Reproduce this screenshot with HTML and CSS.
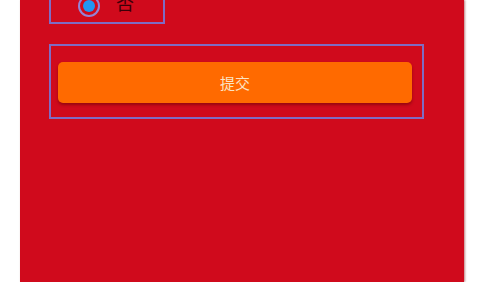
FILE: index.html
```html
<!DOCTYPE html>
<html lang="zh">
<head>
<meta charset="utf-8">
<link rel="stylesheet" href="styles.css">
</head>
<body>
<div class="page">
  <div class="radio-group">
    <span class="radio"><span class="dot"></span></span>
    <span class="label">否</span>
  </div>
  <div class="submit-box">
    <button class="submit">提交</button>
  </div>
</div>
</body>
</html>
```
FILE: styles.css
```css
html, body {
  margin: 0;
  padding: 0;
  background: #ffffff;
  font-family: "Noto Sans CJK SC", "Noto Sans", sans-serif;
}
.page {
  margin-left: 20px;
  width: 444px;
  height: 282px;
  background: #d00a1c;
  padding-left: 29px;
  box-sizing: border-box;
  overflow: hidden;
  box-shadow: 1px 0 2px rgba(120, 0, 0, 0.5);
}
.radio-group {
  margin-top: -16px;
  width: 116px;
  height: 40px;
  box-sizing: border-box;
  border: 2px solid #7f6cc4;
  display: flex;
  align-items: flex-end;
  padding: 0 0 5px 27px;
}
.radio {
  width: 22px;
  height: 22px;
  box-sizing: border-box;
  border: 2.5px solid #9484d6;
  border-radius: 50%;
  display: flex;
  align-items: center;
  justify-content: center;
}
.dot {
  width: 12px;
  height: 12px;
  border-radius: 50%;
  background: #2196f3;
}
.label {
  margin-left: 16px;
  margin-bottom: 5px;
  font-size: 18px;
  line-height: 20px;
  color: #3c0008;
}
.submit-box {
  margin-top: 20px;
  width: 375px;
  height: 75px;
  box-sizing: border-box;
  border: 2px solid #7f6cc4;
  padding: 16px 0 0 7px;
}
.submit {
  display: block;
  width: 354px;
  height: 41px;
  border: none;
  border-radius: 5px;
  background: #ff6a00;
  color: #fbe3c4;
  font-family: "Noto Sans CJK SC", "Noto Sans", sans-serif;
  font-size: 15px;
  padding: 0;
  box-shadow: 0 2px 3px rgba(80, 0, 0, 0.45);
}
```
